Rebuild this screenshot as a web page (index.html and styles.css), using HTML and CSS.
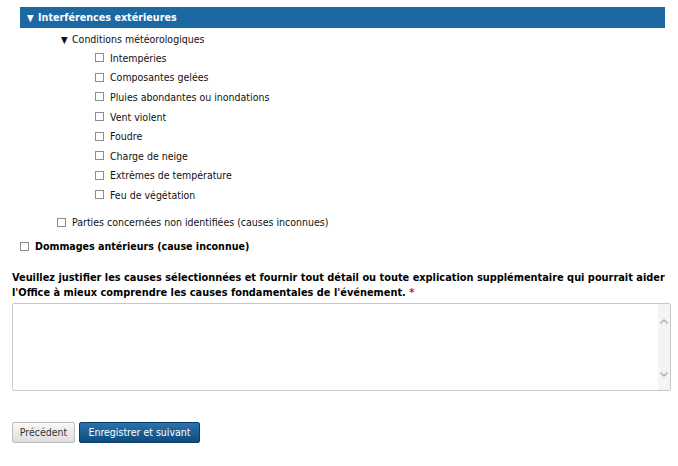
FILE: index.html
```html
<!DOCTYPE html>
<html lang="fr">
<head>
<meta charset="utf-8">
<title>Interférences extérieures</title>
<link rel="stylesheet" href="styles.css">
</head>
<body>
<div class="page">
  <div class="section-head"><span class="caret">▼</span>Interférences extérieures</div>

  <div class="group-title"><span class="caret">▼</span>Conditions météorologiques</div>
  <ul class="checks">
    <li class="check"><span class="cb"></span>Intempéries</li>
    <li class="check"><span class="cb"></span>Composantes gelées</li>
    <li class="check"><span class="cb"></span>Pluies abondantes ou inondations</li>
    <li class="check"><span class="cb"></span>Vent violent</li>
    <li class="check"><span class="cb"></span>Foudre</li>
    <li class="check"><span class="cb"></span>Charge de neige</li>
    <li class="check"><span class="cb"></span>Extrêmes de température</li>
    <li class="check"><span class="cb"></span>Feu de végétation</li>
  </ul>

  <div class="check sub"><span class="cb"></span>Parties concernées non identifiées (causes inconnues)</div>
  <div class="check top"><span class="cb"></span>Dommages antérieurs (cause inconnue)</div>

  <p class="label">Veuillez justifier les causes sélectionnées et fournir tout détail ou toute explication supplémentaire qui pourrait aider<br>l'Office à mieux comprendre les causes fondamentales de l'événement.&nbsp;<span class="req">*</span></p>

  <div class="textbox">
    <textarea class="input" aria-label="Justification"></textarea>
    <div class="scrollbar">
      <svg class="arrow" width="8" height="5" viewBox="0 0 8 5"><path d="M0.5 4.5 L4 1 L7.5 4.5" fill="none" stroke="#a9a9a9" stroke-width="1.3"/></svg>
      <svg class="arrow" width="8" height="5" viewBox="0 0 8 5"><path d="M0.5 0.5 L4 4 L7.5 0.5" fill="none" stroke="#a9a9a9" stroke-width="1.3"/></svg>
    </div>
  </div>

  <div class="actions">
    <button class="btn">Précédent</button>
    <button class="btn primary">Enregistrer et suivant</button>
  </div>
</div>
</body>
</html>
```
FILE: styles.css
```css
body {
  margin: 0;
  background: #ffffff;
  font-family: "DejaVu Sans Condensed", "DejaVu Sans", sans-serif;
  font-size: 10.5px;
  color: #111111;
}

.page {
  padding-top: 7px;
}

.section-head {
  margin-left: 20px;
  width: 645px;
  height: 21px;
  box-sizing: border-box;
  padding-left: 7px;
  line-height: 21px;
  background: #1b68a3;
  color: #ffffff;
  font-weight: bold;
  font-size: 10.7px;
}

.caret {
  display: inline-block;
  font-size: 9.5px;
  vertical-align: baseline;
}

.section-head .caret {
  width: 11px;
}

.group-title {
  margin-top: 2px;
  padding-left: 61px;
  height: 18px;
  line-height: 18px;
}

.group-title .caret {
  width: 11px;
}

.checks {
  list-style: none;
  margin: 0;
  padding: 0 0 0 95px;
}

.check {
  display: flex;
  align-items: center;
  height: 19.6px;
}

.cb {
  width: 9px;
  height: 9px;
  box-sizing: border-box;
  border: 1px solid #8c8c8c;
  background: #ffffff;
  margin-right: 6px;
  flex: none;
}

.sub {
  margin-top: 7.5px;
  padding-left: 57px;
}

.top {
  margin-top: 4.6px;
  padding-left: 20px;
  font-weight: bold;
  font-size: 10.6px;
  color: #000000;
}

.label {
  margin: 14px 0 0 0;
  padding-left: 12px;
  line-height: 15px;
  font-weight: bold;
  font-size: 10.9px;
  white-space: nowrap;
  color: #000000;
}

.req {
  color: #e01010;
}

.textbox {
  display: flex;
  margin: 3px 0 0 12px;
  width: 659px;
  height: 88px;
  box-sizing: border-box;
  border: 1px solid #c9c9c9;
  border-radius: 2px;
  background: #ffffff;
}

.input {
  flex: 1;
  border: none;
  resize: none;
  outline: none;
  margin: 0;
  padding: 3px;
  font: inherit;
  background: transparent;
}

.scrollbar {
  width: 12px;
  flex: none;
  background: #f4f4f4;
  display: flex;
  flex-direction: column;
  justify-content: space-between;
  align-items: center;
  padding: 15px 0 13px;
  box-sizing: border-box;
}

.arrow {
  display: block;
}

.actions {
  display: flex;
  gap: 4px;
  margin-top: 31px;
  padding-left: 12px;
}

.btn {
  height: 21px;
  box-sizing: border-box;
  padding: 0;
  border: 1px solid #bdbdbd;
  border-radius: 2px;
  background: linear-gradient(#f7f7f7, #dedede);
  color: #333333;
  font-family: inherit;
  font-size: 10.5px;
  line-height: 19px;
  width: 63px;
}

.btn.primary {
  width: 121px;
  border-color: #0d3e66;
  background: linear-gradient(#2873ad, #0f4b7d);
  color: #ffffff;
}
```
